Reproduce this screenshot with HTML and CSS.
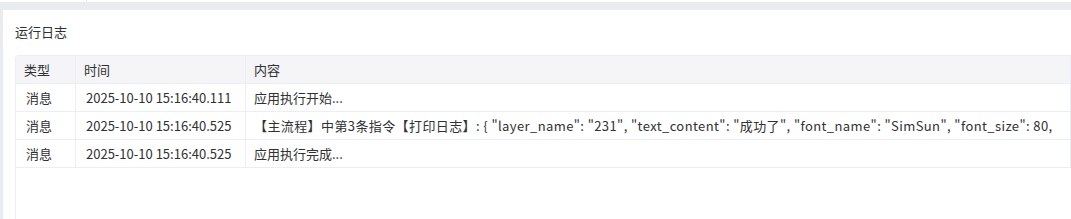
FILE: index.html
```html
<!DOCTYPE html>
<html lang="zh-CN">
<head>
    <meta charset="UTF-8">
    <title>运行日志</title>
    <link rel="stylesheet" href="styles.css">
</head>
<body>
    <div class="top-strip"><div class="top-left"></div></div>
    <div class="panel">
        <div class="panel-title">运行日志</div>
        <div class="log-wrap">
            <table class="log-table">
                <colgroup>
                    <col class="col-type">
                    <col class="col-time">
                    <col>
                </colgroup>
                <thead>
                    <tr><th>类型</th><th>时间</th><th>内容</th></tr>
                </thead>
                <tbody>
                    <tr>
                        <td class="type">消息</td>
                        <td class="time">2025-10-10 15:16:40.111</td>
                        <td>应用执行开始...</td>
                    </tr>
                    <tr>
                        <td class="type">消息</td>
                        <td class="time">2025-10-10 15:16:40.525</td>
                        <td class="msg">【主流程】中第3条指令【打印日志】: { "layer_name": "231", "text_content": "成功了", "font_name": "SimSun", "font_size": 80,</td>
                    </tr>
                    <tr>
                        <td class="type">消息</td>
                        <td class="time">2025-10-10 15:16:40.525</td>
                        <td>应用执行完成...</td>
                    </tr>
                </tbody>
            </table>
        </div>
    </div>
</body>
</html>
```

FILE: styles.css
```css
body {
    margin: 0;
    height: 100vh;
    overflow: hidden;
    background: #e8ebef;
    display: flex;
    flex-direction: column;
    font-family: "Noto Sans CJK SC", "Noto Sans", sans-serif;
    color: #303133;
}

.top-strip {
    height: 2px;
    background: #fff;
    flex-shrink: 0;
}

.top-left {
    width: 86px;
    height: 2px;
    border-right: 1px solid #e4e7ed;
}

.panel {
    flex: 1;
    margin: 8px 0 0 3px;
    background: #fff;
    padding: 11px 0 0 12px;
    display: flex;
    flex-direction: column;
    min-height: 0;
}

.panel-title {
    font-size: 13px;
    line-height: 22px;
    margin-bottom: 12px;
}

.log-wrap {
    flex: 1;
    border-left: 1px solid #ebeef5;
    border-top: 1px solid #ebeef5;
    border-top-left-radius: 4px;
}

.log-table {
    width: 100%;
    table-layout: fixed;
    border-collapse: separate;
    border-spacing: 0;
    font-size: 13px;
}

.col-type { width: 60px; }
.col-time { width: 170px; }

.log-table th,
.log-table td {
    height: 27px;
    padding: 0 8px;
    border-bottom: 1px solid #ebeef5;
    border-right: 1px solid #ebeef5;
    text-align: left;
    font-weight: normal;
    white-space: nowrap;
    overflow: hidden;
    line-height: 27px;
}

.log-table th {
    background: #f5f5f7;
    color: #303133;
}

.log-table th:first-child {
    border-top-left-radius: 4px;
}

.log-table td.type,
.log-table td.time {
    padding-left: 10px;
}

.log-table td.msg {
    letter-spacing: 0.4px;
}
```
